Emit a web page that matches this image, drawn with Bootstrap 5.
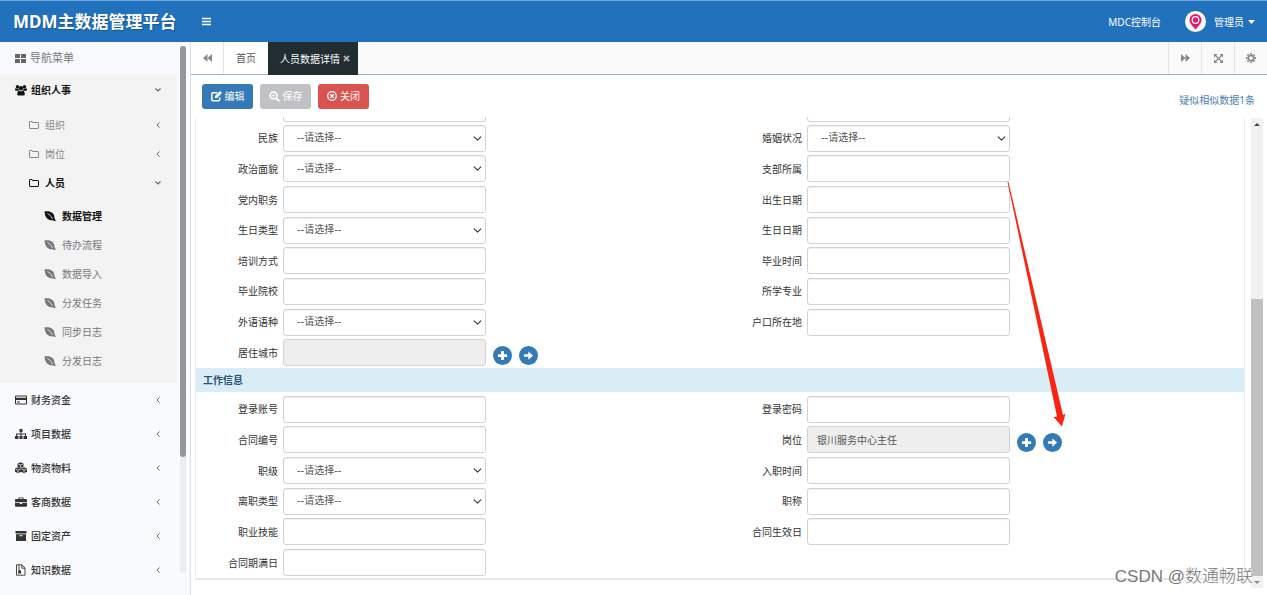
<!DOCTYPE html>
<html lang="zh-CN">
<head>
<meta charset="utf-8">
<meta name="viewport" content="width=device-width, initial-scale=1">
<title>MDM主数据管理平台</title>
<link href="https://cdn.jsdelivr.net/npm/bootstrap@5.3.0/dist/css/bootstrap.min.css" rel="stylesheet">
<style>
:root{--ui:"Noto Sans","Noto Sans CJK SC",sans-serif}
body{font-family:var(--ui);font-size:10px;line-height:16px;color:#333;background:#fff}
a{text-decoration:none;color:inherit}
svg{display:block;flex:none}
button,input,select{font-family:inherit}
/* header */
.topbar{height:42px;background:#2271bd;border-top:1px solid #6aa7dd;color:#fff}
.brand{width:190px;padding-left:13px;font-size:17px;font-weight:700;line-height:24px;text-shadow:1px 1px 1px #1a5794;white-space:nowrap}
.plain-btn{border:0;background:none;color:inherit;padding:0;font-size:10px;line-height:16px}
.account{margin-right:12px}
/* sidebar */
.shell{min-height:calc(100vh - 42px)}
.sidebar{width:191px;background:#f9fafd;border-right:1px solid #d9dfe8}
.menu{width:177px}
.menu-title{height:32px;padding-left:15px;font-size:11px;color:#777}
.top-item{height:34px;padding:0 15px;font-weight:500;color:#333}
.top-item .ms-auto,.sub-item .ms-auto{color:#666}
.open-group{background:#f3f3f4;padding-bottom:8px}
.open-group .top-item{height:32px;font-weight:700;color:#111}
.sub-item{height:29px;padding:0 15px 0 28px;color:#888}
.leaf-item{height:29px;padding-left:44px;color:#777}
.sub-item svg:first-child{margin-right:5px}
.leaf-item svg{margin-right:6px}
.is-on{font-weight:700;color:#111}
.side-track{width:6px;margin:4px 4px 22px 3px;background:#ebecee;border-radius:3px}
.side-thumb{height:78%;background:#959698;border-radius:3px}
/* tabs */
.tabbar{height:33px;background:#fafafb;border-bottom:1px solid #8fb3d0;color:#555}
.tabbar .cell{height:32px;display:flex;align-items:center;justify-content:center;color:#888;width:33px;border:0;border-left:1px solid #e3e3e3;background:none;padding:0}
.tabbar .cell.first{border-left:0;border-right:1px solid #e3e3e3;background:#fff}
.tab{padding:0 12px;color:#555;background:#fff}
.tab.current{background:#222d32;color:#fff;height:33px;padding-right:8px}
.tab.current svg{margin-left:3px}
/* toolbar */
.toolbar{height:42px;padding:0 12px 0 11px}
.tools{gap:7px}
.tool{width:51px;height:25px;padding:0;border:0;border-radius:3px;font-size:10px;line-height:16px;color:#fff;display:flex;align-items:center;justify-content:center;gap:3px}
.tool.edit{background:#337ab7}.tool.save{background:#bfc1c5}.tool.shut{background:#d9534f}
.dup{color:#4a7fb0}
/* form */
.scroll-area{padding:0 6px 8px 4px}
.panel{border:1px solid #ebebeb;border-top:0;border-bottom:2px solid #e8e8e8}
.cut-row{height:6px;padding-bottom:1px;overflow:hidden}
.fields{display:grid;grid-template-columns:1fr 1fr;grid-auto-rows:1fr}
.fields.basic{min-height:245px}
.fields.work{min-height:186px;padding-top:2px}
.field{display:flex;align-items:center;gap:5px}
.field>label,.lab{width:82px;text-align:right;color:#333;flex:none}
.ctl{flex:0 1 203px;min-width:0;height:27px;min-height:0;padding:0 9px;border:1px solid #d2d2d2;border-radius:3px;font-size:10px;line-height:16px;color:#555;box-shadow:inset 0 1px 1px #f0f0f0}
select.ctl{font-family:"DejaVu Sans","Noto Sans CJK SC",sans-serif;padding:0 20px 0 13px;background-position:right 3px center;background-size:9px 9px}
input.ctl[readonly]{background:#eee}
.round{width:19px;height:19px;border:0;border-radius:50%;background:#337ab7;color:#fff;display:flex;align-items:center;justify-content:center;padding:0}
.ops{display:flex;gap:7px;margin-left:2px;padding-top:6px}
.band{height:24px;padding-left:7px;background:#d9edf7;color:#28507c;font-weight:700;font-size:10px;margin:0;display:flex;align-items:center}
.bar{width:12px;background:#f1f1f1;margin-top:1px}
.bar-arrow{height:12px;display:flex;align-items:center;justify-content:center}
.bar-gap{flex:168 0 0}
.bar-thumb{flex:275 0 0;background:#c1c1c1}
/* annotation layer */
.pointer{position:absolute;left:1000px;top:178px;pointer-events:none}
.watermark{position:absolute;right:14px;top:566px;font-family:"Liberation Sans","Noto Sans CJK SC",sans-serif;font-size:17px;line-height:22px;font-weight:300;color:#777;white-space:nowrap;text-shadow:1px 1px 0 #fff}
</style>
</head>
<body class="position-relative">
<svg width="0" height="0" class="position-absolute" aria-hidden="true">
<defs>
<symbol id="left" viewBox="0 0 8 8"><path d="M5.500 1.500 3 4l2.500 2.500" fill="none" stroke="currentColor"/></symbol>
<symbol id="down" viewBox="0 0 8 8"><path d="M1.500 2.500 4 5l2.500-2.500" fill="none" stroke="currentColor" stroke-width="1.200"/></symbol>
<symbol id="folder" viewBox="0 0 12 12"><path d="M1.500 3q0-.5.5-.5h2q.5 0 .5 1h5.500q.5 0 .5.5v5q0 .5-.5.5H2q-.5 0-.5-.5z" fill="none" stroke="currentColor"/></symbol>
<symbol id="leaf" viewBox="0 0 12 12"><path d="M.5 1.500C6 .5 10.500 2.500 10.500 8l1.200 2.500-.6.700L9.500 10.500C3.500 10.500 1 7.500.5 1.500z" fill="currentColor"/><path d="M3.500 3.500Q7 5 8.500 9" fill="none" stroke="#f3f3f4" stroke-width=".8"/></symbol>
<symbol id="group" viewBox="0 0 12 12"><circle cx="2.500" cy="2.800" r="1.700"/><circle cx="9.500" cy="2.800" r="1.700"/><circle cx="6" cy="4.300" r="2.200"/><path d="M0 4.500h3.300q.2 1.700 1 2.200H1Q0 6.700 0 5.700zM12 4.500H8.700q-.2 1.700-1 2.200H11q1 0 1-1zM2.200 10.500q0-3.500 2-3.700 1.800 1 3.600 0 2 .2 2 3.700 0 1-1.200 1H3.400q-1.200 0-1.200-1z"/></symbol>
<symbol id="cardi" viewBox="0 0 12 12"><path d="M1 1.500h10q1 0 1 1v7q0 1-1 1H1q-1 0-1-1v-7q0-1 1-1zM1 2.500v1.200h10V2.500zM1 6v3.500h10V6zM2 7.500h3v1H2z" fill-rule="evenodd"/></symbol>
<symbol id="tree" viewBox="0 0 12 12"><path d="M4.500 1h3v3h-1v1.500H11V8h1v3H8.500V8H10V6.500H6.500V8h1v3h-3V8h1V6.500H2V8h1.500v3H0V8h1V5.500h4.500V4h-1z"/></symbol>
<symbol id="cubes" viewBox="0 0 12 12"><path d="M5.500.3 8.500 1.500v3.200L5.500 6 2.500 4.700V1.500zM3 5.300l3 1.300v3.200l-3 1.500-3-1.500V6.600zM9 5.300l3 1.300v3.200l-3 1.500-3-1.500V6.600z"/><path d="M3 2l2.500 1L8 2M5.500 3v2.500M.5 7 3 8l2.500-1M3 8v2.800M6.500 7 9 8l2.500-1M9 8v2.800" stroke="#f9fafd" stroke-width=".7" fill="none"/></symbol>
<symbol id="case" viewBox="0 0 12 12"><path d="M3.500 3V1.500h5V3H11q1 0 1 1v2.200H0V4q0-1 1-1zm1 0h3v-.7h-3zM0 7h4.800v1h2.400V7H12v2.700q0 1-1 1H1q-1 0-1-1z" fill-rule="evenodd"/></symbol>
<symbol id="archive" viewBox="0 0 12 12"><path d="M.5 1h11v2.500H.5zM1 4.200h10V11H1zM4.500 5.200v1h3v-1z" fill-rule="evenodd"/></symbol>
<symbol id="file" viewBox="0 0 12 12"><path d="M1.500.8H7L10 4v7.200H1.500zM6.800 1v3.200H10M4 1v5" fill="none" stroke="currentColor" stroke-width=".9"/><path d="M3.500 6h2l.8 3.500H3z"/></symbol>
<symbol id="plus" viewBox="0 0 12 12"><path d="M6 1v10M1 6h10" stroke="currentColor" stroke-width="3" fill="none"/></symbol>
<symbol id="go" viewBox="0 0 12 12"><path d="M1 4.700h4.800V1.500L11 6l-5.200 4.500V7.300H1z"/></symbol>
</defs>
</svg>

<header class="topbar d-flex align-items-center">
  <a class="brand" href="#">MDM主数据管理平台</a>
  <button class="plain-btn ms-2 ps-1" aria-label="切换菜单"><svg width="9" height="9" viewBox="0 0 9 9"><path d="M0 1.500h9M0 4.500h9M0 7.500h9" stroke="#fff" stroke-width="1.700"/></svg></button>
  <a class="ms-auto me-4" href="#">MDC控制台</a>
  <button class="plain-btn account d-flex align-items-center"><svg width="21" height="21" viewBox="0 0 21 21"><circle cx="10.500" cy="10.500" r="10.500" fill="#fff"/><path d="M10.500 18.500C6.500 14 4.500 11.500 4.500 9a6 6 0 0 1 12 0c0 2.500-2 5-6 9.500z" fill="#e6176b"/><circle cx="10.500" cy="9" r="3.300" fill="#e6176b" stroke="#fff" stroke-width="1.200"/></svg><span class="ms-2">管理员</span><svg class="ms-1" width="7" height="4" viewBox="0 0 7 4"><path d="M0 0h7L3.500 4z" fill="#fff"/></svg></button>
</header>

<div class="shell d-flex">
<aside class="sidebar d-flex flex-shrink-0">
  <nav class="menu">
    <div class="menu-title d-flex align-items-center gap-1"><svg width="11" height="11" viewBox="0 0 11 11" fill="#666"><path d="M0 1h5v4H0zM6 1h5v4H6zM0 6h5v4H0zM6 6h5v4H6z"/></svg>导航菜单</div>
    <div class="open-group">
      <a class="top-item d-flex align-items-center" href="#"><svg class="me-1" width="12" height="12" fill="currentColor"><use href="#group"/></svg><span>组织人事</span><svg class="ms-auto" width="8" height="8"><use href="#down"/></svg></a>
      <div class="pt-1">
        <a class="sub-item d-flex align-items-center" href="#"><svg width="12" height="12"><use href="#folder"/></svg><span>组织</span><svg class="ms-auto" width="8" height="8"><use href="#left"/></svg></a>
        <a class="sub-item d-flex align-items-center" href="#"><svg width="12" height="12"><use href="#folder"/></svg><span>岗位</span><svg class="ms-auto" width="8" height="8"><use href="#left"/></svg></a>
        <a class="sub-item is-on d-flex align-items-center" href="#"><svg width="12" height="12"><use href="#folder"/></svg><span>人员</span><svg class="ms-auto" width="8" height="8"><use href="#down"/></svg></a>
      </div>
      <div class="pt-1" id="leaves"></div>
    </div>
    <div id="groups"></div>
  </nav>
  <div class="side-track"><div class="side-thumb"></div></div>
</aside>

<main class="flex-grow-1">
  <div class="tabbar d-flex">
    <button class="cell first" aria-label="向左"><svg width="9" height="8" viewBox="0 0 9 8" fill="#888"><path d="M4.500 0v8L0 4zM9 0v8L4.500 4z"/></svg></button>
    <a class="tab d-flex align-items-center" href="#">首页</a>
    <a class="tab current d-flex align-items-center" href="#">人员数据详情<svg width="7" height="7" viewBox="0 0 7 7"><path d="M1 1l5 5M6 1 1 6" stroke="#aaa" stroke-width="2"/></svg></a>
    <button class="cell ms-auto" aria-label="向右"><svg width="9" height="8" viewBox="0 0 9 8" fill="#888"><path d="M0 0v8l4.500-4zM4.500 0v8L9 4z"/></svg></button>
    <button class="cell" aria-label="全屏"><svg width="9" height="9" viewBox="0 0 9 9"><path d="M1 1l7 7M8 1 1 8" stroke="#888" stroke-width="1.200"/><path d="M0 0h3.500L0 3.500zM9 0v3.500L5.500 0zM0 9V5.500L3.500 9zM9 9H5.500L9 5.500z" fill="#888"/></svg></button>
    <button class="cell" aria-label="设置"><svg width="10" height="10" viewBox="0 0 10 10"><circle cx="5" cy="5" r="2.700" fill="none" stroke="#888" stroke-width="1.700"/><path d="M5 0v1.500M5 8.500V10M0 5h1.500M8.500 5H10M1.500 1.500l1 1M7.500 7.500l1 1M8.500 1.500l-1 1M2.500 7.500l-1 1" stroke="#888" stroke-width="1.800"/></svg></button>
  </div>
  <div class="toolbar d-flex align-items-center">
    <div class="tools d-flex">
      <button class="tool edit"><svg width="11" height="11" viewBox="0 0 11 11"><path d="M6.500 1.700H2Q.8 1.700.8 3v5.500q0 1.200 1.200 1.200h5.500q1.200 0 1.200-1.200V6.500" fill="none" stroke="#fff" stroke-width="1.500"/><path d="M9 0l2 2-5 5H4V5z" fill="#fff"/></svg>编辑</button>
      <button class="tool save"><svg width="11" height="11" viewBox="0 0 11 11"><circle cx="4.500" cy="4.500" r="3.500" fill="none" stroke="#fff" stroke-width="1.600"/><path d="M7 7l3.300 3.300" stroke="#fff" stroke-width="2"/><path d="M2.700 4.500h3.600M4.500 2.700v3.600" stroke="#fff"/></svg>保存</button>
      <button class="tool shut"><svg width="10" height="10" viewBox="0 0 10 10" fill="none" stroke="#fff"><circle cx="5" cy="5" r="4.300" stroke-width="1.300"/><path d="M3.300 3.300l3.400 3.400M6.700 3.300 3.300 6.700" stroke-width="1.500"/></svg>关闭</button>
    </div>
    <a class="dup ms-auto mt-2" href="#">疑似相似数据1条</a>
  </div>
  <div class="d-flex pe-1">
    <form class="scroll-area flex-grow-1">
      <div class="panel">
        <div class="cut-row d-flex align-items-end">
          <div class="field w-50"><span class="lab"></span><input class="form-control ctl align-self-end" aria-label="上一项"></div>
          <div class="field w-50"><span class="lab"></span><input class="form-control ctl align-self-end" aria-label="上一项"></div>
        </div>
        <div class="fields basic" id="basic"></div>
        <h2 class="band">工作信息</h2>
        <div class="fields work" id="work"></div>
      </div>
    </form>
    <div class="bar d-flex flex-column">
      <div class="bar-arrow"><svg width="6" height="3" viewBox="0 0 6 3"><path d="M0 3 3 0l3 3z" fill="#444"/></svg></div>
      <div class="bar-gap"></div>
      <div class="bar-thumb"></div>
      <div class="bar-arrow"><svg width="6" height="3" viewBox="0 0 6 3"><path d="M0 0h6L3 3z" fill="#888"/></svg></div>
    </div>
  </div>
</main>
</div>

<svg class="pointer" width="70" height="252" viewBox="0 0 70 252"><path d="M7.500 4 8.500 4 63 237l2.500-1.500L62 248.500 53.500 239l3.500-.5z" fill="#fb2413"/></svg>
<div class="watermark">CSDN @数通畅联</div>

<script>
const leaves = ['数据管理','待办流程','数据导入','分发任务','同步日志','分发日志'];
document.getElementById('leaves').innerHTML = leaves.map((t, i) =>
  `<a class="leaf-item d-flex align-items-center ${i ? '' : 'is-on'}" href="#"><svg width="12" height="12"><use href="#leaf"/></svg><span>${t}</span></a>`).join('');
const groups = [['cardi','财务资金'],['tree','项目数据'],['cubes','物资物料'],['case','客商数据'],['archive','固定资产'],['file','知识数据']];
document.getElementById('groups').innerHTML = groups.map(([icon, t]) =>
  `<a class="top-item d-flex align-items-center" href="#"><svg class="me-1" width="12" height="12" fill="currentColor"><use href="#${icon}"/></svg><span>${t}</span><svg class="ms-auto" width="8" height="8"><use href="#left"/></svg></a>`).join('');

// kinds: s = drop-down, t = text box, r = read-only with lookup buttons
let n = 0;
function field([label, kind, value = '']) {
  if (!label) return '<div></div>';
  const id = 'f' + (++n);
  const control = kind === 's'
    ? `<select id="${id}" class="form-select ctl"><option>--请选择--</option></select>`
    : `<input id="${id}" type="text" class="form-control ctl" value="${value}"${kind === 'r' ? ' readonly' : ''}>`;
  const ops = kind === 'r'
    ? `<div class="ops"><button type="button" class="round" aria-label="添加"><svg width="11" height="11"><use href="#plus"/></svg></button><button type="button" class="round" aria-label="跳转"><svg width="11" height="11" fill="currentColor"><use href="#go"/></svg></button></div>` : '';
  return `<div class="field"><label for="${id}">${label}</label>${control}${ops}</div>`;
}
document.getElementById('basic').innerHTML = [
  ['民族','s'],['婚姻状况','s'],['政治面貌','s'],['支部所属','t'],['党内职务','t'],['出生日期','t'],
  ['生日类型','s'],['生日日期','t'],['培训方式','t'],['毕业时间','t'],['毕业院校','t'],['所学专业','t'],
  ['外语语种','s'],['户口所在地','t'],['居住城市','r'],['']].map(field).join('');
document.getElementById('work').innerHTML = [
  ['登录账号','t'],['登录密码','t'],['合同编号','t'],['岗位','r','银川服务中心主任'],['职级','s'],['入职时间','t'],
  ['离职类型','s'],['职称','t'],['职业技能','t'],['合同生效日','t'],['合同期满日','t'],['']].map(field).join('');
</script>
<script src="https://cdn.jsdelivr.net/npm/bootstrap@5.3.0/dist/js/bootstrap.bundle.min.js"></script>
</body>
</html>
